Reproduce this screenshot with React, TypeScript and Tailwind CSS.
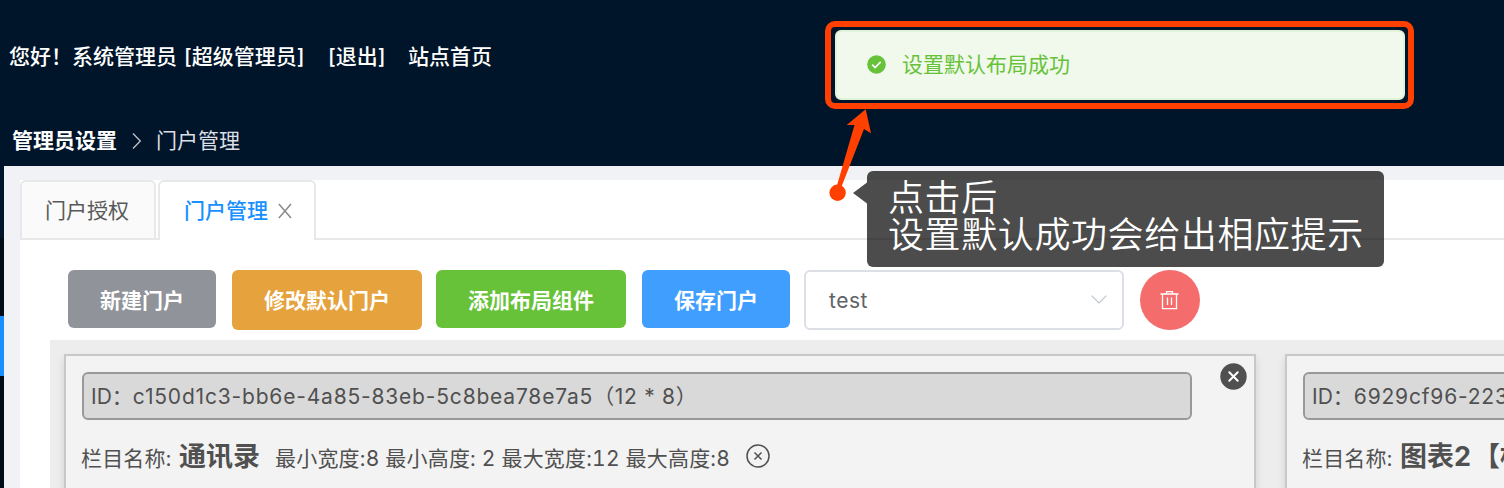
import React from "react";

type ActionProps = { label: string; className: string };

function Action({ label, className }: ActionProps) {
  return (
    <button
      className={`flex shrink-0 items-start justify-center rounded-[6px] pt-[16px] text-[21px] font-bold leading-[30px] text-white ${className}`}
    >
      {label}
    </button>
  );
}

function CardShell({ className, children }: { className: string; children: React.ReactNode }) {
  return (
    <section
      className={`relative h-[260px] shrink-0 border-2 border-[#c8c8c8] bg-[#f3f3f3] px-4 pt-4 text-[#505050] shadow-[0_5px_8px_rgba(0,0,0,0.12)] ${className}`}
    >
      {children}
    </section>
  );
}

function IdBox({ className, children }: { className: string; children: React.ReactNode }) {
  return (
    <div
      className={`flex h-12 items-center whitespace-pre rounded-[6px] border-2 border-[#999999] bg-[#d9d9d9] pl-[7px] pt-[2px] text-[21px] leading-[30px] ${className}`}
    >
      {children}
    </div>
  );
}

export default function App() {
  return (
    <div className="relative flex h-[488px] w-[1504px] flex-col overflow-hidden bg-[#001529] font-['Inter','Noto_Sans_CJK_SC',sans-serif]">
      <header className="flex h-[166px] shrink-0 flex-col text-[21px] leading-[30px] text-white">
        <div className="mt-[42px] flex h-[30px] whitespace-pre pl-[9px] font-medium">
          <span className="w-[319px]">
            您好！系统管理员<span className="ml-[7px]">[超级管理员]</span>
          </span>
          <span className="w-[80px]">[退出]</span>
          <span>站点首页</span>
        </div>
        <nav className="mt-[54px] flex h-[30px] items-center pl-3">
          <span className="font-bold">管理员设置</span>
          <svg className="ml-[15px] mr-[14px] h-[18px] w-[10px]" viewBox="0 0 10 18" fill="none" stroke="#c0c4cc" strokeWidth="1.3">
            <path d="M1 1.5 8.3 9 1 16.5" />
          </svg>
          <span className="text-[#dcdfe6]">门户管理</span>
        </nav>
      </header>

      <div className="flex h-[322px]">
        <aside className="flex w-1 shrink-0 flex-col bg-[#000c17]">
          <div className="h-[72px] bg-[#001529]" />
          <div className="mt-[78px] h-[60px] bg-[#1890ff]" />
        </aside>

        <main className="min-w-0 flex-1 bg-[#f0f2f5] pl-4 pt-[14px]">
          <div className="h-full overflow-hidden bg-white">
            <div className="flex h-[60px] text-[21px] leading-[30px]">
              <div className="flex w-[136px] items-center rounded-t-[6px] border-2 border-[#e8e8e8] bg-[#fafafa] pl-[23px] pt-[2px] text-[#595959]">
                门户授权
              </div>
              <div className="w-[2px] border-b-2 border-[#e8e8e8]" />
              <div className="flex w-[158px] items-center rounded-t-[6px] border-x-2 border-t-2 border-[#e8e8e8] pl-6 text-[#1890ff]">
                <span className="font-medium">门户管理</span>
                <svg className="ml-[10px] h-4 w-[14px]" viewBox="0 0 14 16" fill="none" stroke="#8c8c8c" strokeWidth="1.6">
                  <path d="M.9 1 13 15M13 1 .9 15" />
                </svg>
              </div>
              <div className="flex-1 border-b-2 border-[#e8e8e8]" />
            </div>

            <div className="mt-[30px] flex h-[70px] items-start pl-12">
              <Action label="新建门户" className="h-[58px] w-[148px] bg-[#909399]" />
              <Action label="修改默认门户" className="ml-4 h-[60px] w-[190px] bg-[#e6a23c]" />
              <Action label="添加布局组件" className="ml-[14px] h-[58px] w-[190px] bg-[#67c23a]" />
              <Action label="保存门户" className="ml-4 h-[58px] w-[148px] bg-[#409eff]" />
              <div className="ml-[14px] flex h-[60px] w-[320px] items-center justify-between rounded-[6px] border-2 border-[#dcdfe6] pl-[23px] pr-[15px] text-[21px] tracking-[0.5px] text-[#606266]">
                <span className="mt-[2px]">test</span>
                <svg className="mb-[2px] h-[9px] w-[16px]" viewBox="0 0 16 9" fill="none" stroke="#c0c4cc" strokeWidth="1.2">
                  <path d="M.6.6 8 8 15.4.6" />
                </svg>
              </div>
              <button className="ml-4 flex h-[60px] w-[60px] items-center justify-center rounded-full bg-[#f56c6c]">
                <svg className="h-5 w-5" viewBox="0 0 20 20" fill="none" stroke="#fff" strokeWidth="1.3">
                  <path d="M.5 4h18M2.5 4v14.6h14V4M6.5 4V1.6h6V4M7.5 7.5v7.5M11.5 7.5v7.5" />
                </svg>
              </button>
            </div>

            <div className="ml-[30px] flex h-[148px] bg-[#ededed] pl-[14px] pt-[14px]">
              <CardShell className="w-[1192px]">
                <IdBox className="w-[1110px]">
                  ID：<span className="tracking-[0.81px]">c150d1c3-bb6e-4a85-83eb-5c8bea78e7a5</span>
                  <span className="tracking-[0.7px]">（12 * 8）</span>
                </IdBox>
                <div className="-ml-px mt-[19px] flex h-9 items-baseline whitespace-pre text-[21px] leading-9">
                  <span className="w-[98px] tracking-[0.15px]">栏目名称:</span>
                  <strong className="w-[96px] text-[27px]">通讯录</strong>
                  <span className="tabular-nums tracking-[0.2px]">最小宽度:8 最小高度: 2 最大宽度:12 最大高度:8</span>
                  <svg className="mb-[2px] ml-4 h-6 w-6 self-center" viewBox="0 0 24 24" fill="none" stroke="#505050" strokeWidth="1.5">
                    <circle cx="12" cy="12" r="11" />
                    <path d="m8.5 8.5 7 7m0-7-7 7" />
                  </svg>
                </div>
                <svg className="absolute right-[7px] top-[7px] h-[27px] w-[27px]" viewBox="0 0 27 27">
                  <circle cx="13.5" cy="13.5" r="13.2" fill="#505050" />
                  <path d="m9.3 9.3 8.4 8.4m0-8.4-8.4 8.4" stroke="#fff" strokeWidth="2" strokeLinecap="round" />
                </svg>
              </CardShell>
              <CardShell className="ml-[29px] w-[1192px]">
                <IdBox className="w-[1110px]">
                  ID：<span className="tracking-[0.81px]">6929cf96-223</span>
                </IdBox>
                <div className="-ml-px mt-[19px] flex h-9 items-baseline whitespace-pre text-[21px] leading-9">
                  <span className="w-[98px] tracking-[0.15px]">栏目名称:</span>
                  <strong className="text-[27px]">
                    图表<span className="tracking-[2px]">2</span>【标
                  </strong>
                </div>
              </CardShell>
            </div>
          </div>
        </main>
      </div>

      <div className="absolute left-[825px] top-[21px] h-[88px] w-[589px] rounded-[10px] border-[6px] border-[#ff4000] py-[3px] pl-1">
        <div className="flex h-[70px] w-[570px] items-center rounded-[6px] border-2 border-[#e1f3d8] bg-[#f0f9eb] pl-[30px]">
          <svg className="mb-[2px] h-[19px] w-[19px]" viewBox="0 0 19 19" fill="none">
            <circle cx="9.5" cy="9.5" r="9.3" fill="#67c23a" />
            <path d="m5.2 9.6 2.9 2.9 5.6-5.6" stroke="#fff" strokeWidth="1.6" />
          </svg>
          <span className="ml-[16px] text-[21px] leading-[30px] text-[#67c23a]">设置默认布局成功</span>
        </div>
      </div>

      <svg className="absolute left-[820px] top-[100px] h-[110px] w-[60px]" viewBox="820 100 60 110" fill="#ff4000">
        <path d="M865.7 109.2 871 133.2 864 129 841 188 836.5 187 854.5 125 846.7 125Z" />
        <circle cx="837.6" cy="192.7" r="8.2" />
      </svg>

      <div className="absolute left-[853px] top-[171px] flex h-24">
        <svg className="mt-[10px] h-6 w-[14px]" viewBox="0 0 14 24" fill="#000" fillOpacity="0.7">
          <path d="M14 1.5v21L0 12Z" />
        </svg>
        <div className="h-24 w-[517px] whitespace-nowrap rounded-[6px] bg-black/70 pl-[21px] pt-[9px] text-[36px] font-[350] leading-[37px] tracking-[0.6px] text-white">
          <div>点击后</div>
          <div>设置默认成功会给出相应提示</div>
        </div>
      </div>
    </div>
  );
}
